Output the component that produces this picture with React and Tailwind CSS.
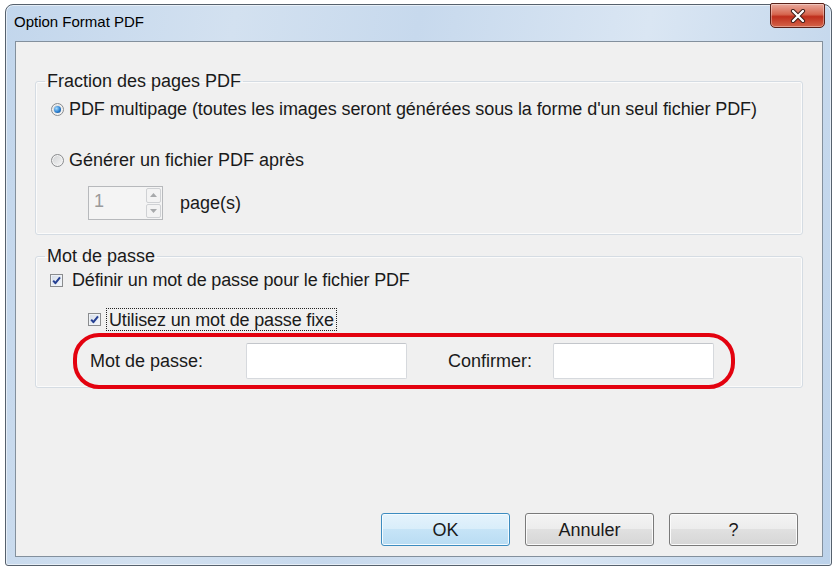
import React from 'react';

const Radio = ({ checked }) => (
  <span className="flex h-[13px] w-[13px] shrink-0 items-center justify-center rounded-full border border-[#8a8c8e] bg-[linear-gradient(135deg,#cfd1d3,#f7f7f7)] shadow-[inset_0_0_0_1px_#f4f4f4]">
    {checked && (
      <span className="h-[7px] w-[7px] rounded-full bg-[radial-gradient(circle_at_35%_35%,#a6dcff,#2a7fd0_55%,#0e3f7c)]" />
    )}
  </span>
);

const Checkbox = () => (
  <span className="flex h-[13px] w-[13px] shrink-0 items-center justify-center border border-[#8a8c8e] bg-[linear-gradient(135deg,#d3dbe6,#f7f9fc)] shadow-[inset_0_0_0_1px_#eef2f7]">
    <svg viewBox="0 0 11 11" className="h-[11px] w-[11px]">
      <path d="M2.2 5.6 L4.4 8.2 L9 2.4" fill="none" stroke="#243f92" strokeWidth="2" strokeLinejoin="round" />
    </svg>
  </span>
);

const Group = ({ title, children }) => (
  <fieldset className="mx-[19px] rounded-[3px] border border-[#d5dce3] shadow-[inset_0_0_0_1px_#fbfbfb]">
    <legend className="ml-[9px] px-[2px] text-[18px] leading-[20px]">{title}</legend>
    {children}
  </fieldset>
);

const App = () => {
  return (
    <div className="h-[568px] w-[837px] bg-white pl-[5px] pt-[4px] font-['Liberation_Sans',Arial,sans-serif] text-[#1a1a1a]">
      {/* Window frame */}
      <div className="flex h-[562px] w-[827px] flex-col rounded-t-[8px] rounded-b-[3px] border border-[#56616d] bg-[linear-gradient(100deg,#c2d6ec_0%,#d3e1f0_25%,#c7d9ed_45%,#dae6f3_70%,#bcd2ea_100%)] shadow-[inset_0_0_0_1px_rgba(255,255,255,0.55)]">
        {/* Title bar */}
        <div className="flex h-[36px] shrink-0 items-start justify-between pl-[8px] pr-[6px]">
          <span className="pt-[8px] text-[15px] leading-[18px] text-black">Option Format PDF</span>
          <div className="-mt-[2px] flex h-[25px] w-[55px] items-center justify-center rounded-b-[5px] rounded-t-[2px] border border-[#5a2018] bg-[linear-gradient(#e9a99c_0%,#d6664f_45%,#bf2f1c_55%,#d4644a_100%)] shadow-[inset_0_0_0_1px_rgba(255,255,255,0.35)]">
            <svg viewBox="0 0 16 14" className="h-[14px] w-[16px]">
              <path d="M3 2 L13 12 M13 2 L3 12" stroke="#3a1a16" strokeWidth="4.2" strokeLinecap="round" />
              <path d="M3 2 L13 12 M13 2 L3 12" stroke="#ffffff" strokeWidth="2.4" strokeLinecap="round" />
            </svg>
          </div>
        </div>

        {/* Client area */}
        <div className="mb-[8px] ml-[9px] mr-[8px] flex flex-1 flex-col border border-[#83909d] bg-[#f0f0f0] text-[18px]">
          <div className="mt-[29px]">
            <Group title="Fraction des pages PDF">
              <div className="pb-[14px] pl-[15px] pt-[8px]">
                <div className="flex h-[20px] items-center gap-[5px]">
                  <Radio checked />
                  <span className="whitespace-nowrap leading-[20px] tracking-[-0.08px]">PDF multipage (toutes les images seront générées sous la forme d'un seul fichier PDF)</span>
                </div>
                <div className="mt-[31px] flex h-[20px] items-center gap-[5px]">
                  <Radio />
                  <span className="leading-[20px]">Générer un fichier PDF après</span>
                </div>
                <div className="ml-[37px] mt-[16px] flex items-center gap-[17px]">
                  <div className="flex h-[34px] w-[75px] border border-[#b7b9bc] bg-[#f4f4f4]">
                    <span className="flex-1 pl-[5px] pt-[3px] leading-[22px] text-[#9a9a9a]">1</span>
                    <div className="flex w-[17px] flex-col gap-[1px] p-[1px]">
                      <div className="flex flex-1 items-center justify-center rounded-[2px] border border-[#cfd1d4] bg-[#f3f3f3]">
                        <svg viewBox="0 0 7 4" className="h-[4px] w-[7px]"><path d="M0 4 L3.5 0 L7 4 Z" fill="#a7a9ab" /></svg>
                      </div>
                      <div className="flex flex-1 items-center justify-center rounded-[2px] border border-[#cfd1d4] bg-[#f3f3f3]">
                        <svg viewBox="0 0 7 4" className="h-[4px] w-[7px]"><path d="M0 0 L7 0 L3.5 4 Z" fill="#a7a9ab" /></svg>
                      </div>
                    </div>
                  </div>
                  <span>page(s)</span>
                </div>
              </div>
            </Group>
          </div>

          <div className="mt-[11px]">
            <Group title="Mot de passe">
              <div className="pt-[4px]">
                <div className="flex h-[20px] items-center gap-[9px] pl-[14px]">
                  <Checkbox />
                  <span className="whitespace-nowrap leading-[20px] tracking-[-0.15px]">Définir un mot de passe pour le fichier PDF</span>
                </div>
                <div className="ml-[52px] mt-[18px] flex h-[23px] items-center gap-[5px]">
                  <Checkbox />
                  <span className="flex h-[23px] items-center whitespace-nowrap border border-dotted border-[#222] pl-[2px] pr-[2px] leading-[20px] tracking-[-0.15px]">
                    Utilisez un mot de passe fixe
                  </span>
                </div>
                {/* highlighted password row */}
                <div className="relative z-10 -mb-[2px] ml-[37px] mt-[2px] flex h-[56px] w-[662px] items-center rounded-[26px] border-[4px] border-[#e3020f] pl-[13px]">
                  <span className="w-[156px]">Mot de passe:</span>
                  <div className="h-[36px] w-[161px] rounded-[2px] border border-[#d6d9dd] border-t-[#c3c6cb] bg-white" />
                  <span className="ml-[41px] w-[105px]">Confirmer:</span>
                  <div className="h-[36px] w-[161px] rounded-[2px] border border-[#d6d9dd] border-t-[#c3c6cb] bg-white" />
                </div>
              </div>
            </Group>
          </div>

          {/* Buttons */}
          <div className="mb-[10px] mt-auto flex justify-end gap-[15px] pr-[24px]">
            <button className="h-[33px] w-[129px] rounded-[3px] border border-[#3d8cc0] bg-[linear-gradient(#e5f3fc_0%,#d8edfa_50%,#c6e4f7_50%,#b9dcf3_100%)] text-[18px] leading-[20px] text-[#1a1a1a] shadow-[inset_0_0_0_1px_#f4fbff]">
              OK
            </button>
            <button className="h-[33px] w-[129px] rounded-[3px] border border-[#7a7a7a] bg-[linear-gradient(#f4f4f4_0%,#ececec_50%,#e0e0e0_50%,#d6d6d6_100%)] text-[18px] leading-[20px] text-[#1a1a1a] shadow-[inset_0_0_0_1px_#fbfbfb]">
              Annuler
            </button>
            <button className="h-[33px] w-[129px] rounded-[3px] border border-[#7a7a7a] bg-[linear-gradient(#f4f4f4_0%,#ececec_50%,#e0e0e0_50%,#d6d6d6_100%)] text-[18px] leading-[20px] text-[#1a1a1a] shadow-[inset_0_0_0_1px_#fbfbfb]">
              ?
            </button>
          </div>
        </div>
      </div>
    </div>
  );
};

export default App;
